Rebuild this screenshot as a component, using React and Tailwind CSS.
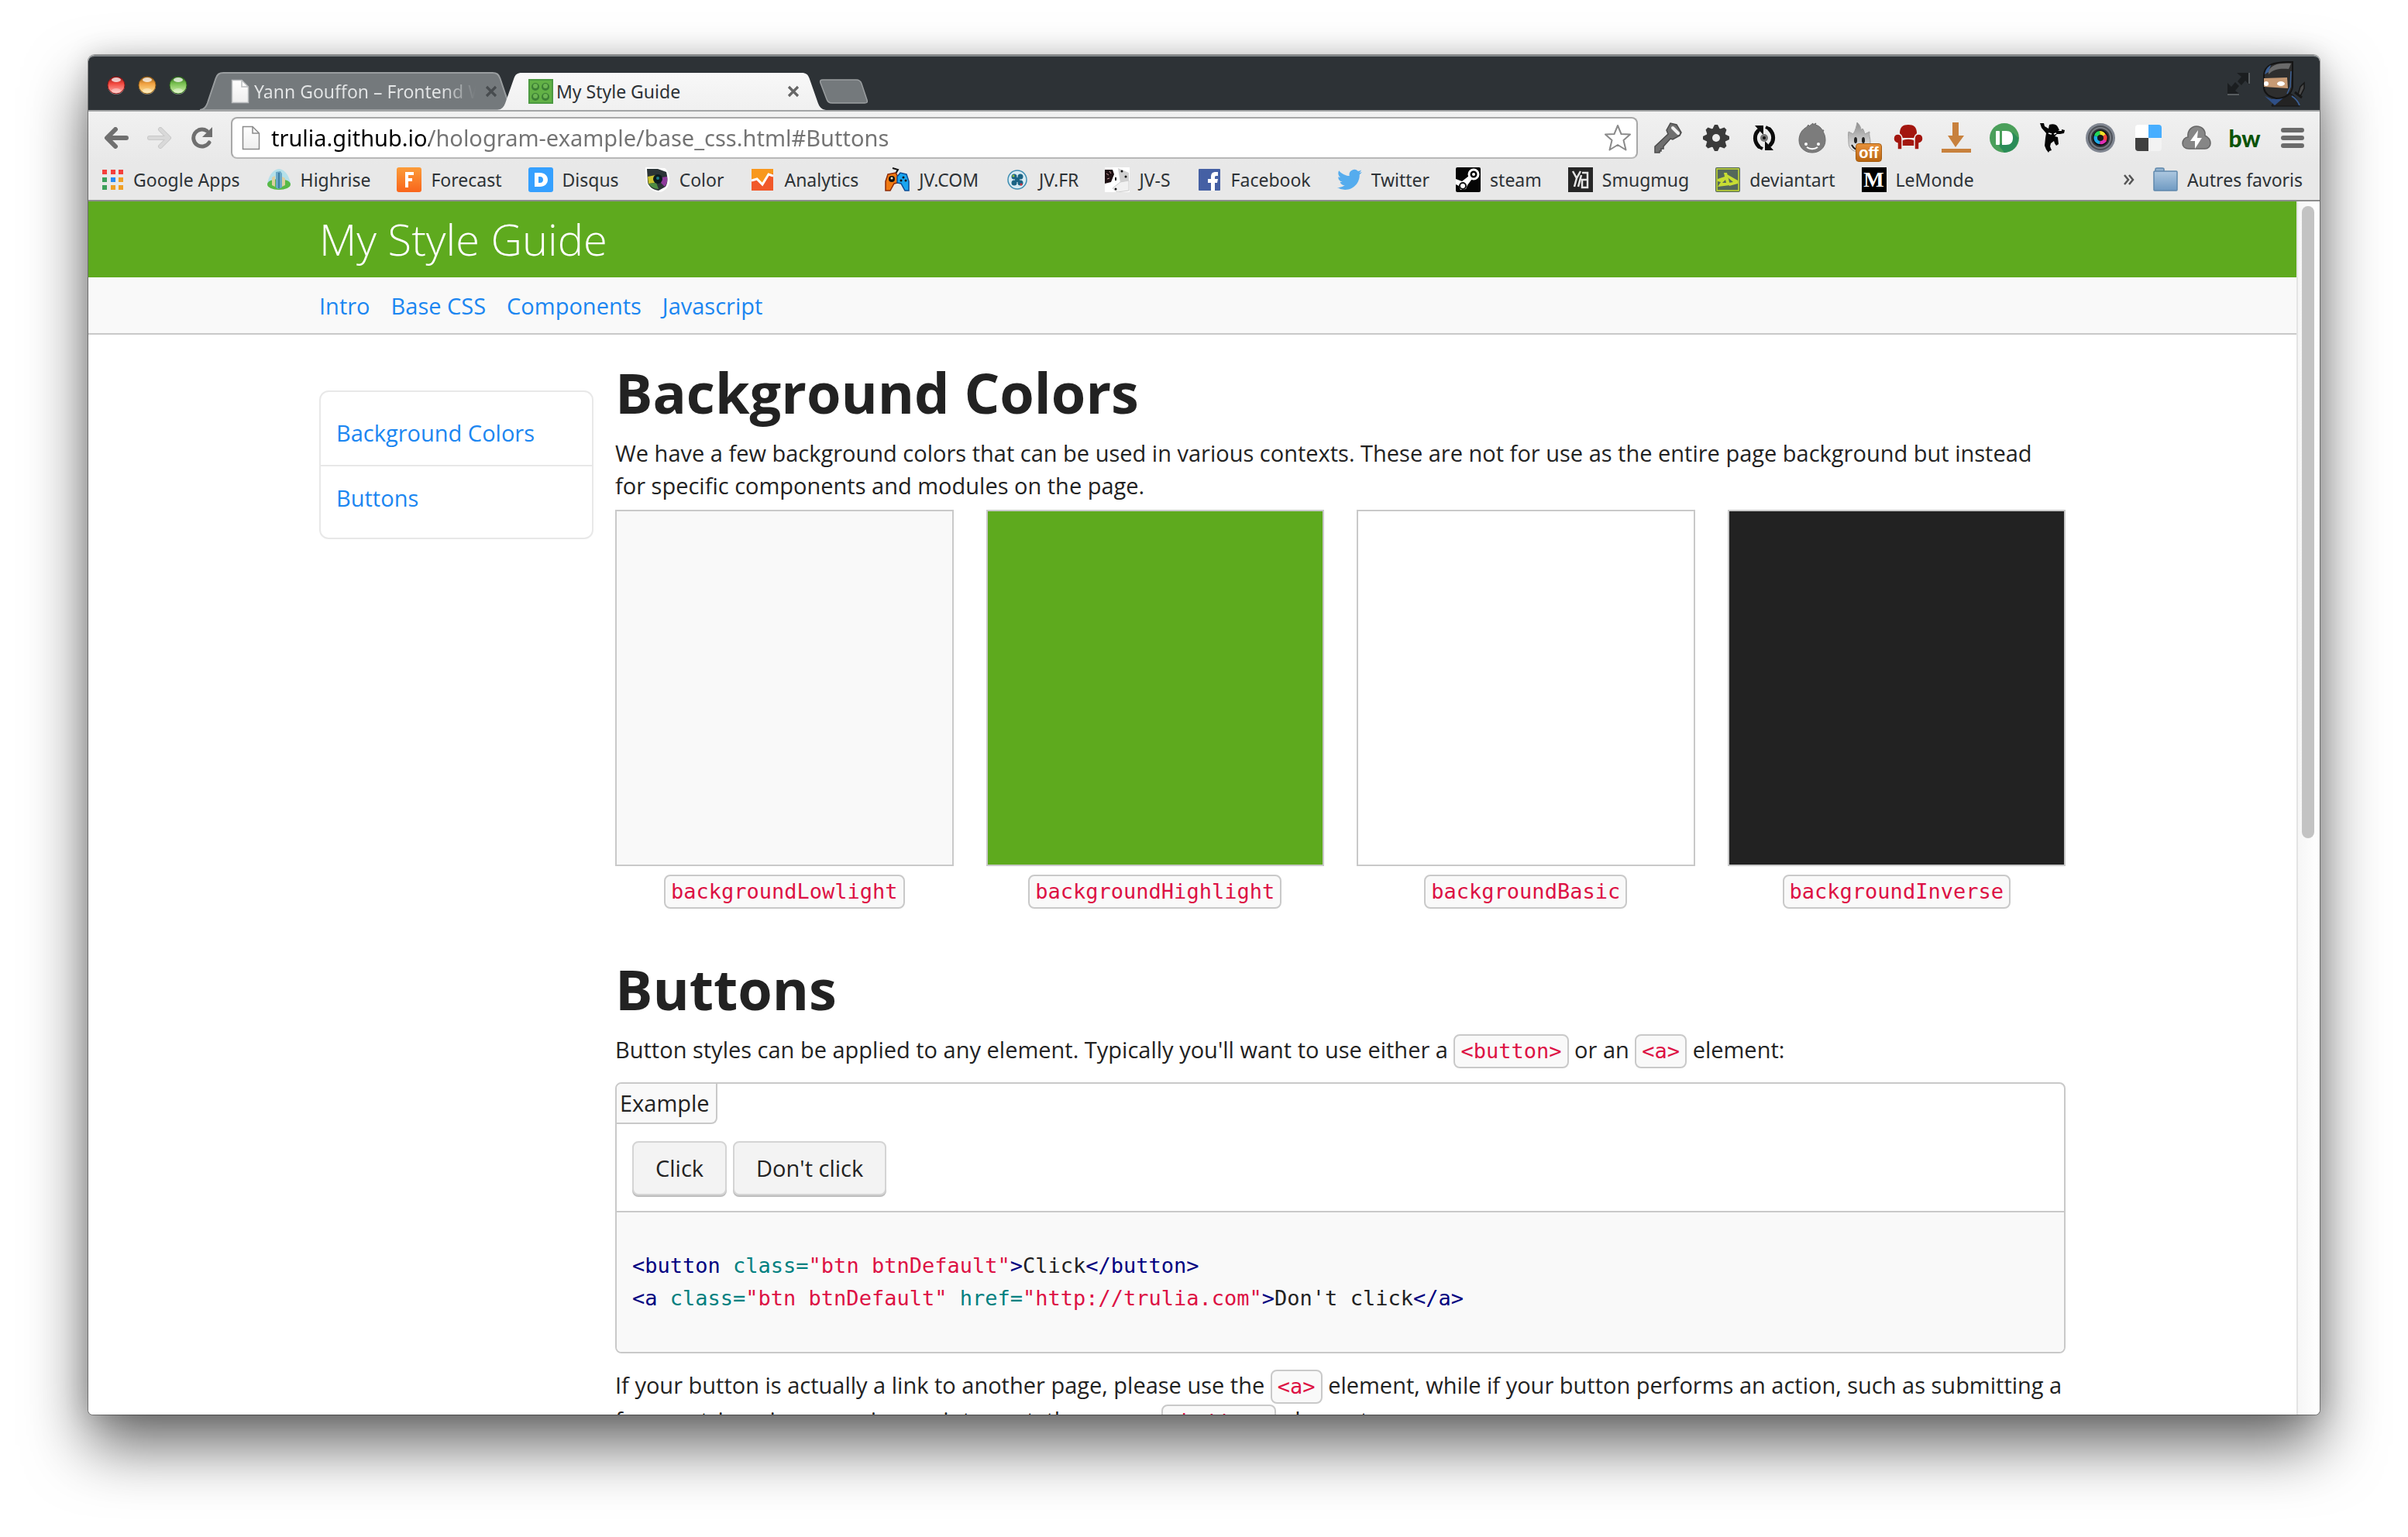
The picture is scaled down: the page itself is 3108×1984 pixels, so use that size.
import React from "react";

/* ---------- window chrome drawings ---------- */

function TrafficLight({ label, dark, base, glow }) {
  return (
    <button type="button" aria-label={label} className="size-6">
      <svg viewBox="0 0 24 24" className="size-6">
        <defs>
          <linearGradient id={"tl-" + label} x1="0" y1="0" x2="0" y2="1">
            <stop offset="0" stopColor={dark} />
            <stop offset="0.4" stopColor={base} />
            <stop offset="1" stopColor={glow} />
          </linearGradient>
        </defs>
        <circle cx="12" cy="13" r="11" fill="#8a9094" />
        <circle cx="12" cy="12" r="11" fill={"url(#tl-" + label + ")"} stroke={dark} strokeWidth="1" />
        <ellipse cx="12" cy="5" rx="6" ry="3" fill="#fff" opacity="0.75" />
        <ellipse cx="12" cy="19" rx="6" ry="3" fill="#fff" opacity="0.35" />
      </svg>
    </button>
  );
}

function PageIcon({ stroke }) {
  return (
    <svg viewBox="0 0 24 32" className="h-8 w-6 shrink-0">
      <defs>
        <linearGradient id="pageFill" x1="0" y1="0" x2="0" y2="1">
          <stop offset="0" stopColor="#fff" />
          <stop offset="1" stopColor="#eee" />
        </linearGradient>
      </defs>
      <path d="M1.5 1.5H14L22.5 10V30.5H1.5Z" fill="url(#pageFill)" stroke={stroke} strokeWidth="1.5" />
      <path d="M14 1.5V10H22.5" fill="none" stroke={stroke} strokeWidth="1.5" />
    </svg>
  );
}

function BrickIcon() {
  return (
    <svg viewBox="0 0 32 32" className="size-8 shrink-0">
      <rect width="32" height="32" fill="#4c9a41" />
      <rect x="2" y="2" width="28" height="28" fill="#62b146" />
      {[[9, 10], [22, 10], [9, 23], [22, 23]].map(([x, y]) => (
        <g key={x + "-" + y}>
          <circle cx={x} cy={y} r="5" fill="#3c7f35" />
          <circle cx={x} cy={y - 1} r="3" fill="#6cb552" />
        </g>
      ))}
    </svg>
  );
}

function CloseX({ color }) {
  return (
    <svg viewBox="0 0 16 16" className="size-4">
      <path d="M2 2L14 14M14 2L2 14" stroke={color} strokeWidth="3.2" />
    </svg>
  );
}

function TabShape({ active }) {
  return (
    <svg viewBox="0 0 416 49" preserveAspectRatio="none" className="absolute inset-0 h-full w-full">
      <defs>
        <linearGradient id="tabActive" x1="0" y1="0" x2="0" y2="1">
          <stop offset="0" stopColor="#f8f8f8" />
          <stop offset="1" stopColor="#f0f0f0" />
        </linearGradient>
      </defs>
      <path
        d="M0 49C6 48 8 45 10 40L21 8C23 3 25 1 31 1H385C391 1 393 3 395 8L406 40C408 45 410 48 416 49Z"
        fill={active ? "url(#tabActive)" : "#74797c"}
        stroke={active ? "none" : "#9a9ea0"}
        strokeWidth="2"
      />
    </svg>
  );
}

function NinjaAvatar() {
  return (
    <svg viewBox="0 0 56 60" className="h-[60px] w-14">
      <path d="M12 59L18 46L33 42C42 44 46 52 48 59Z" fill="#232323" stroke="#141414" strokeWidth="1" />
      <path d="M38 46C43 49 46 53 48 58" fill="none" stroke="#3b5f94" strokeWidth="2" />
      <path d="M3 46L12 50L30 46L16 58Z" fill="#2f4f86" />
      <path d="M2 20C2 6 14 1 39 2V34C38 43 30 49 18 49C8 47 3 42 2 36Z" fill="#2e2e2e" stroke="#141414" strokeWidth="2" />
      <path d="M8 14C11 6 20 3 37 4L34 11C24 10 14 11 8 18Z" fill="#6a6a6a" />
      <path d="M37 14L36 34L32 43" fill="none" stroke="#3b5f94" strokeWidth="1.5" />
      <path d="M3 18C4 12 7 8 11 6L8 15Z" fill="#3b5f94" />
      <path d="M2 23L32 22L33 36L2 34Z" fill="#c79a74" />
      <ellipse cx="5" cy="30" rx="3" ry="3" fill="#fff" />
      <ellipse cx="24" cy="30" rx="5" ry="3" fill="#fff" />
      <path d="M46 44L49 34L54 29L54 36L49 46Z" fill="#4a4a4a" stroke="#161616" strokeWidth="1.5" />
      <path d="M42 41L51 48" stroke="#161616" strokeWidth="3" />
    </svg>
  );
}

/* ---------- extension icons ---------- */

const EXTENSIONS = [
  {
    name: "Key",
    art: (
      <svg viewBox="0 0 38 40" className="h-10 w-[38px]">
        <path d="M2 39V31L19 15L17 10L22 1L30 3L36 13L34 17L25 22L22 21L13 31V34H10V37H8V39Z" fill="#6f6f6f" stroke="#4b4b4b" strokeWidth="1.5" />
        <path d="M25 7L32 14" stroke="#f0f0f0" strokeWidth="4" strokeLinecap="round" />
      </svg>
    ),
  },
  {
    name: "Settings",
    art: (
      <svg viewBox="-18 -18 36 36" className="size-9">
        {[0, 45, 90, 135].map((a) => (
          <path key={a} d="M-4 -13L-2 -17H2L4 -13V13L2 17H-2L-4 13Z" fill="#3a3a3a" transform={"rotate(" + a + ")"} />
        ))}
        <circle r="13" fill="#3a3a3a" />
        <circle r="5" fill="#ececec" />
      </svg>
    ),
  },
  {
    name: "Sync",
    art: (
      <svg viewBox="0 0 32 34" className="h-[34px] w-8">
        <path d="M8 8C3 13 3 22 9 28" fill="none" stroke="#0c0c0c" strokeWidth="5" strokeLinecap="round" />
        <path d="M24 26C29 21 29 12 23 6" fill="none" stroke="#0c0c0c" strokeWidth="5" strokeLinecap="round" />
        <path d="M4 1H15V13L11 9Z" fill="#0c0c0c" />
        <path d="M28 33H17V21L21 25Z" fill="#0c0c0c" />
        <path d="M18 3L24 6" stroke="#0c0c0c" strokeWidth="4" />
        <path d="M14 31L8 28" stroke="#0c0c0c" strokeWidth="4" />
        <circle cx="16" cy="17" r="5" fill="#777" />
        <circle cx="16" cy="17" r="2" fill="#111" />
      </svg>
    ),
  },
  {
    name: "Smiley",
    art: (
      <svg viewBox="0 0 36 40" className="h-10 w-9">
        <path d="M1 23C1 15 5 9 11 6L13 3L14 5L19 1V3L23 1L22 3C26 4 29 6 31 10L33 10L32 12C34 15 35 19 35 23C35 33 27 39 18 39S1 33 1 23Z" fill="#7c7c7c" stroke="#6a6a6a" />
        <circle cx="10" cy="28" r="2" fill="#fff" />
        <circle cx="26" cy="28" r="2" fill="#fff" />
        <path d="M11 32C15 35 21 35 25 32" fill="none" stroke="#fff" strokeWidth="2" />
      </svg>
    ),
  },
  {
    name: "Flame",
    art: (
      <span className="relative block h-10 w-9">
        <svg viewBox="0 0 36 40" className="h-10 w-9">
          <defs>
            <linearGradient id="flame" x1="0" y1="0" x2="0" y2="1">
              <stop offset="0" stopColor="#8d8d8d" />
              <stop offset="1" stopColor="#efefef" />
            </linearGradient>
          </defs>
          <path d="M3 26C3 20 2 16 3 12L9 15C12 10 13 5 14 0C18 4 19 7 19 10L21 8C23 10 23 13 24 15L30 12C29 17 31 20 31 25C31 34 25 38 17 38S3 34 3 26Z" fill="url(#flame)" stroke="#a0a0a0" strokeWidth="1" />
          <ellipse cx="12" cy="23" rx="2" ry="4" fill="#222" />
          <ellipse cx="22" cy="23" rx="2" ry="4" fill="#222" />
          <path d="M7 29C10 35 14 36 18 36" fill="none" stroke="#222" strokeWidth="2" />
        </svg>
        <span className="absolute top-[27px] left-3 h-6 w-[34px] rounded-sm border border-[#a55c10] bg-linear-to-b from-[#e8913a] to-[#b9660f] text-center font-['Liberation_Sans'] text-xl leading-[22px] font-bold text-white">
          off
        </span>
      </span>
    ),
  },
  {
    name: "Chair",
    art: (
      <svg viewBox="0 0 40 36" className="h-9 w-10">
        <path d="M9 12C9 4 13 1 20 1S31 4 31 12L28 18H12Z" fill="#a3160f" />
        <path d="M11 22C17 19 23 19 29 22L28 28H12Z" fill="#a3160f" />
        <path d="M1 19C1 14 4 13 7 13C11 13 12 17 12 20V33H6V25C3 24 1 22 1 19ZM39 19C39 14 36 13 33 13C29 13 28 17 28 20V33H34V25C37 24 39 22 39 19Z" fill="#a3160f" stroke="#ececec" strokeWidth="1.5" />
      </svg>
    ),
  },
  {
    name: "Download",
    art: (
      <svg viewBox="0 0 38 40" className="h-10 w-[38px]">
        <path d="M14 0H22V17H29L18 32L8 17H14ZM0 34H38V39H0Z" fill="#c8813d" />
      </svg>
    ),
  },
  {
    name: "Push",
    art: (
      <svg viewBox="0 0 38 38" className="size-[38px]">
        <circle cx="19" cy="19" r="19" fill="#4a9f5a" />
        <path d="M30 12L37 19C37 29 30 37 19 38L12 29Z" fill="#2a8c58" />
        <rect x="8" y="10" width="5" height="18" rx="1" fill="#fff" />
        <path d="M16 10H21C27 10 30 13 30 19S27 28 21 28H16Z" fill="#fff" />
      </svg>
    ),
  },
  {
    name: "Jumping ninja",
    art: (
      <svg viewBox="0 0 34 40" className="h-10 w-[34px]">
        <path d="M1 1L6 1L7 5L12 8L13 3C18 1 23 3 24 6L26 10L24 11L29 11V9L33 10L32 14L27 15L23 15L20 18L24 19L25 28L22 30L20 27L19 24L15 27L14 31L16 36L13 37L12 39L9 35L7 30L8 20L9 14L3 7Z" fill="#060606" />
        <path d="M12 14L16 15M19 15L22 14" stroke="#fff" strokeWidth="1.5" />
      </svg>
    ),
  },
  {
    name: "Lens",
    art: (
      <svg viewBox="0 0 38 38" className="size-[38px]">
        <circle cx="19" cy="19" r="19" fill="#808691" />
        <circle cx="19" cy="19" r="16" fill="#4d5158" />
        <circle cx="19" cy="19" r="14" fill="#777b82" />
        <circle cx="19" cy="19" r="12" fill="#303238" />
        <circle cx="19" cy="19" r="10" fill="#0b0b0d" />
        <path d="M19 19L11 16A8 8 0 0 1 18 10Z" fill="#22d65a" />
        <path d="M19 19L18 10A9 9 0 0 1 26 15Z" fill="#f1e22b" />
        <path d="M19 19L26 14A9 9 0 0 1 26 24Z" fill="#f0433a" />
        <path d="M19 19L27 23A9 9 0 0 1 18 27Z" fill="#e02fb5" />
        <path d="M19 19L18 27A8 8 0 0 1 11 16Z" fill="#1fa9e6" />
        <circle cx="19" cy="19" r="4" fill="#17171c" />
      </svg>
    ),
  },
  {
    name: "Bookmarking",
    art: (
      <span className="grid size-[34px] grid-cols-2 overflow-hidden rounded-sm">
        <span className="bg-white" />
        <span className="bg-[#47aeff]" />
        <span className="bg-[#404040]" />
        <span className="bg-[#f3f3f3]" />
      </span>
    ),
  },
  {
    name: "Cloud",
    art: (
      <svg viewBox="0 0 38 34" className="h-[34px] w-[38px]">
        <path d="M9 31C4 31 1 28 1 24C1 20 4 16 8 16C7 7 13 2 19 2C26 2 31 7 30 14C34 16 37 19 37 24C37 28 34 31 30 31Z" fill="#868686" stroke="#666" strokeWidth="1.5" />
        <path d="M21 7L11 21H17L17 31L26 17H20Z" fill="#fff" />
      </svg>
    ),
  },
  {
    name: "bw",
    art: <span className="block font-['Lato'] text-[30px] leading-9 font-black text-[#0b5309]">bw</span>,
  },
];

/* ---------- bookmark icons ---------- */

const APP_DOTS = ["#f43f3b", "#f43f3b", "#f43f3b", "#3c9f5a", "#2a8bf2", "#f0a024", "#3c9f5a", "#f0a024", "#f0a024"];

const BOOKMARKS = [
  {
    name: "Google Apps",
    art: (
      <span className="grid h-8 w-7 grid-cols-3 place-content-center gap-1">
        {APP_DOTS.map((c, i) => (
          <span key={i} className="size-1.5" style={{ backgroundColor: c }} />
        ))}
      </span>
    ),
  },
  {
    name: "Highrise",
    art: (
      <svg viewBox="0 0 32 32" className="size-8">
        <path d="M16 2C25 3 30 13 31 22L1 22C2 13 7 3 16 2Z" fill="#b4e0ea" />
        <ellipse cx="16" cy="22" rx="15" ry="7" fill="#58b947" />
        <path d="M7 13L11 11V25L7 23ZM20 12L24 14V23L20 25Z" fill="#dccfa0" />
        <path d="M12 6L18 5L20 8V26L15 28L12 26Z" fill="#6ba9c8" />
        <path d="M16 7V27" stroke="#3c7ea3" strokeWidth="2" />
      </svg>
    ),
  },
  {
    name: "Forecast",
    art: (
      <svg viewBox="0 0 32 32" className="size-8">
        <defs>
          <linearGradient id="forecast" x1="0" y1="0" x2="0" y2="1">
            <stop offset="0" stopColor="#fb9c3a" />
            <stop offset="1" stopColor="#f9651b" />
          </linearGradient>
        </defs>
        <rect width="32" height="32" rx="3" fill="url(#forecast)" />
        <path d="M13 26V8H22M13 16H20" fill="none" stroke="#fff" strokeWidth="4" />
      </svg>
    ),
  },
  {
    name: "Disqus",
    art: (
      <svg viewBox="0 0 32 32" className="size-8">
        <rect width="32" height="32" rx="3" fill="#35a0ff" />
        <path d="M8 7H15C21 7 25 11 25 16S21 25 15 25H8ZM13 12V20H15C18 20 19 18 19 16S18 12 15 12Z" fill="#fff" fillRule="evenodd" />
      </svg>
    ),
  },
  {
    name: "Color",
    art: (
      <svg viewBox="0 0 32 32" className="size-8">
        <path d="M0 0L25 1C29 4 31 10 31 17C31 25 25 32 17 32C9 31 2 26 1 18Z" fill="#fff" />
        <path d="M2 2H16L27 6C29 14 29 20 26 25L17 30C10 29 4 25 3 19Z" fill="#2b3436" />
        <path d="M3 12L13 10L14 20L4 21Z" fill="#c9c22f" />
        <path d="M4 21L14 20L17 28C11 28 7 25 4 21Z" fill="#4d8c42" />
        <path d="M21 13L28 12C29 17 28 21 25 25L20 20Z" fill="#8d3a9b" />
        <circle cx="16" cy="15" r="6" fill="#0b1a1d" />
        <circle cx="16" cy="14" r="2" fill="#1d7a84" />
      </svg>
    ),
  },
  {
    name: "Analytics",
    art: (
      <svg viewBox="0 0 28 28" className="size-7">
        <rect width="28" height="28" fill="#f1592a" />
        <path d="M0 0H28V6L22 8L15 20L8 13L0 16Z" fill="#f8981d" />
        <path d="M0 15L7 13L14 20L22 7L28 9" fill="none" stroke="#fff" strokeWidth="3" />
      </svg>
    ),
  },
  {
    name: "JV.COM",
    art: (
      <svg viewBox="0 0 32 32" className="size-8">
        <path d="M10 1L17 3L14 8" fill="none" stroke="#111" strokeWidth="2" />
        <path d="M4 9L14 7L17 12V20L12 21L7 30L1 30V18Z" fill="#f07a12" stroke="#8c2a06" strokeWidth="1.5" />
        <path d="M28 9L20 7L16 12V20L21 21L26 30L31 30V18Z" fill="#19a5f0" stroke="#0b4c96" strokeWidth="1.5" />
        <circle cx="9" cy="15" r="4" fill="#111" />
        <circle cx="9" cy="14" r="1.5" fill="#f8f0d0" />
        <circle cx="24" cy="13" r="1.5" fill="#111" />
        <circle cx="21" cy="17" r="1.5" fill="#111" />
        <circle cx="27" cy="17" r="1.5" fill="#111" />
      </svg>
    ),
  },
  {
    name: "JV.FR",
    art: (
      <svg viewBox="0 0 28 28" className="size-7">
        <circle cx="14" cy="14" r="12" fill="#d8ebf3" stroke="#3d8db2" strokeWidth="1.5" />
        <g fill="#1b6485">
          <circle cx="10" cy="10" r="3.5" />
          <circle cx="18" cy="10" r="3.5" />
          <circle cx="10" cy="18" r="3.5" />
          <circle cx="18" cy="18" r="3.5" />
          <rect x="11" y="11" width="6" height="6" />
        </g>
        <circle cx="9" cy="9" r="1.5" fill="#8fc13e" />
        <circle cx="19" cy="20" r="1.5" fill="#d92f3b" />
      </svg>
    ),
  },
  {
    name: "JV-S",
    art: (
      <svg viewBox="0 0 32 32" className="size-8">
        <rect width="32" height="32" fill="#fff" />
        <path d="M0 3L10 3L12 9L8 19L0 21Z" fill="#1f1214" />
        <path d="M2 8L5 10M6 5L8 8M3 15L6 14" stroke="#c79a9c" strokeWidth="1" />
        <path d="M17 1L31 7V18L20 20Z" fill="#d0d0d0" />
        <path d="M10 27L20 19L31 17V30L16 32Z" fill="#f1f1f1" stroke="#ccc" />
        <circle cx="22" cy="5" r="1.5" fill="#111" />
        <circle cx="27" cy="12" r="1.5" fill="#111" />
        <circle cx="14" cy="28" r="1.5" fill="#111" />
        <path d="M14 13V17" stroke="#111" strokeWidth="2" />
      </svg>
    ),
  },
  {
    name: "Facebook",
    art: (
      <svg viewBox="0 0 28 28" className="size-7">
        <rect width="28" height="28" rx="1" fill="#4560a4" />
        <path d="M16 28V18H12V13H16V10C16 6 18 4 22 4H25V9H23C21 9 21 10 21 11V13H25L24 18H21V28Z" fill="#fff" />
      </svg>
    ),
  },
  {
    name: "Twitter",
    art: (
      <svg viewBox="0 0 24 24" className="size-8">
        <path
          fill="#55acee"
          d="M23.95 4.57a10 10 0 0 1-2.82.775 4.96 4.96 0 0 0 2.16-2.72c-.951.555-2.005.959-3.127 1.184a4.92 4.92 0 0 0-8.384 4.482C7.69 8.09 4.07 6.13 1.64 3.16a4.82 4.82 0 0 0-.666 2.47c0 1.71.87 3.213 2.188 4.096a4.9 4.9 0 0 1-2.228-.616v.06a4.92 4.92 0 0 0 3.946 4.827 5 5 0 0 1-2.212.085 4.94 4.94 0 0 0 4.604 3.417 9.87 9.87 0 0 1-6.102 2.105c-.39 0-.779-.023-1.17-.067a14 14 0 0 0 7.557 2.209c9.053 0 13.998-7.496 13.998-13.985 0-.21 0-.42-.015-.63a9.94 9.94 0 0 0 2.46-2.548z"
        />
      </svg>
    ),
  },
  {
    name: "steam",
    art: (
      <svg viewBox="0 0 32 32" className="size-8">
        <rect width="32" height="32" rx="2" fill="#050505" />
        <circle cx="23" cy="9" r="6" fill="none" stroke="#fff" strokeWidth="3" />
        <circle cx="23" cy="9" r="2" fill="#fff" />
        <path d="M0 15L8 18L17 11L21 15L15 23L13 28L6 29L4 24L0 22Z" fill="#fff" />
        <circle cx="9" cy="24" r="4" fill="none" stroke="#111" strokeWidth="2" />
      </svg>
    ),
  },
  {
    name: "Smugmug",
    art: (
      <svg viewBox="0 0 32 32" className="size-8">
        <rect width="32" height="32" fill="#262626" />
        <path d="M6 5L11 14L16 5M11 14L8 25M13 25L17 10M18 7H25V26H18V16H25" fill="none" stroke="#e6e6e6" strokeWidth="2.5" />
      </svg>
    ),
  },
  {
    name: "deviantart",
    art: (
      <svg viewBox="0 0 32 32" className="size-8">
        <rect width="32" height="32" rx="2" fill="#54685a" />
        <rect x="2" y="2" width="28" height="28" fill="none" stroke="#c7dd33" strokeWidth="1.5" />
        <path d="M3 15L12 12L11 7H15L19 23L3 25L7 19L3 18ZM15 9L29 17V21L18 24L17 20L23 19L17 14Z" fill="#c7dd33" />
        <path d="M9 20L13 16L14 20Z" fill="#54685a" />
      </svg>
    ),
  },
  {
    name: "LeMonde",
    art: (
      <span className="grid size-8 place-items-center bg-black font-['Liberation_Serif'] text-[28px] leading-8 font-bold text-white">
        M
      </span>
    ),
  },
];

function FolderIcon() {
  return (
    <svg viewBox="0 0 32 32" className="size-8">
      <defs>
        <linearGradient id="folder" x1="0" y1="0" x2="0" y2="1">
          <stop offset="0" stopColor="#adc8e0" />
          <stop offset="1" stopColor="#6f9ac2" />
        </linearGradient>
      </defs>
      <path d="M3 5V2C3 1 4 1 5 1H12C13 1 14 1 14 2V5" fill="#94b4d0" stroke="#5f88ac" strokeWidth="1.5" />
      <rect x="1" y="5" width="30" height="25" rx="1" fill="url(#folder)" stroke="#5f88ac" strokeWidth="1.5" />
    </svg>
  );
}

/* ---------- page pieces ---------- */

function Code({ children }) {
  return (
    <code className="inline-block rounded-lg border-2 border-[#c9c9c9] bg-[#f9f9f9] px-[7px] font-['DejaVu_Sans_Mono',monospace] text-[27px] leading-10 text-[#dd1144]">
      {children}
    </code>
  );
}

const SWATCHES = [
  { name: "backgroundLowlight", fill: "bg-[#f9f9f9]" },
  { name: "backgroundHighlight", fill: "bg-[#5eaa1e]" },
  { name: "backgroundBasic", fill: "bg-white" },
  { name: "backgroundInverse", fill: "bg-[#222222]" },
];

const Tag = ({ children }) => <span className="text-[#000080]">{children}</span>;
const Attr = ({ children }) => <span className="text-[#008080]">{children}</span>;
const Str = ({ children }) => <span className="text-[#dd1144]">{children}</span>;

function TitleBar() {
  return (
    <header className="flex h-[71px] shrink-0 items-end rounded-t-lg border-t-2 border-[#7f8487] bg-[#2d3236] pr-[18px]">
      <div className="flex gap-4 self-center pt-1 pl-6">
        <TrafficLight label="Close" dark="#8f1414" base="#f2493f" glow="#ffb9b4" />
        <TrafficLight label="Minimize" dark="#8f5a14" base="#f0a040" glow="#ffe9a0" />
        <TrafficLight label="Zoom" dark="#2f6a1c" base="#78c050" glow="#d8f5b4" />
      </div>
      <div role="tablist" className="ml-4 flex h-[49px] items-end">
        <div role="tab" aria-selected="false" className="relative -mr-6 flex h-[49px] w-[408px] items-center pr-6 pl-10">
          <TabShape />
          <div className="relative flex min-w-0 flex-1 items-center">
            <PageIcon stroke="#b9bcbe" />
            <span className="ml-1.5 flex-1 overflow-hidden bg-linear-to-r from-[#e4e6e7] from-85% to-[#74797c] bg-clip-text text-[23px] leading-8 whitespace-nowrap text-transparent">
              Yann Gouffon – Frontend Web
            </span>
            <button type="button" aria-label="Close tab" className="ml-3">
              <CloseX color="#484c4f" />
            </button>
          </div>
        </div>
        <div role="tab" aria-selected="true" className="relative flex h-[49px] w-[424px] items-center pr-[34px] pl-10">
          <TabShape active />
          <div className="relative flex flex-1 items-center">
            <BrickIcon />
            <span className="ml-1 flex-1 text-[23px] leading-8 text-[#2d3236]">My Style Guide</span>
            <button type="button" aria-label="Close tab">
              <CloseX color="#666" />
            </button>
          </div>
        </div>
        <button type="button" aria-label="New tab" className="-ml-2 self-center">
          <svg viewBox="0 0 62 32" className="h-8 w-[62px]">
            <path d="M4 1H47C51 1 53 3 54 6L61 27C62 30 61 31 58 31H16C12 31 10 29 9 26L1 5C0 2 1 1 4 1Z" fill="#74797c" stroke="#9a9ea0" strokeWidth="1.5" />
          </svg>
        </button>
      </div>
      <div className="ml-auto flex items-center gap-4 pb-1">
        <button type="button" aria-label="Full screen">
          <svg viewBox="0 0 30 30" className="size-[30px]">
            <path d="M13 1H29V16L24 11L19 17L14 12L19 6ZM17 29H1V14L6 19L11 13L16 18L11 24Z" fill="#1b1e20" />
            <path d="M1 29H16M29 1V15" stroke="#6a6f72" strokeWidth="1.5" />
          </svg>
        </button>
        <NinjaAvatar />
      </div>
    </header>
  );
}

function Toolbar() {
  return (
    <div className="flex h-[70px] shrink-0 items-center border-t-2 border-[#a3a5a6] bg-linear-to-b from-[#f1f1f1] to-[#e8e8e8]">
      <div className="flex w-[184px] shrink-0 items-center gap-6 pl-5">
        <button type="button" aria-label="Back">
          <svg viewBox="0 0 32 28" className="h-7 w-8">
            <path d="M15 3L4 14L15 25M5 14H29" fill="none" stroke="#6f6f6f" strokeWidth="6" strokeLinecap="round" strokeLinejoin="round" />
          </svg>
        </button>
        <button type="button" aria-label="Forward">
          <svg viewBox="0 0 32 28" className="h-7 w-8">
            <path d="M17 3L28 14L17 25M27 14H3" fill="none" stroke="#c9c9c9" strokeWidth="6" strokeLinecap="round" strokeLinejoin="round" />
            <path d="M17 3L28 14L17 25M27 14H3" fill="none" stroke="#d9d9d9" strokeWidth="4" strokeLinecap="round" strokeLinejoin="round" />
          </svg>
        </button>
        <button type="button" aria-label="Reload">
          <svg viewBox="0 0 30 28" className="h-7 w-[30px]">
            <path d="M24 20A11 11 0 1 1 21 5" fill="none" stroke="#6f6f6f" strokeWidth="5" strokeLinecap="round" />
            <path d="M28 0V13H15Z" fill="#6f6f6f" />
          </svg>
        </button>
      </div>
      <div className="flex h-[54px] flex-1 items-center rounded-lg border-2 border-[#a8a8a8] border-b-[#b8b8b8] bg-white pr-1.5 pl-3">
        <PageIcon stroke="#8a8a8a" />
        <input
          type="text"
          aria-label="Address"
          defaultValue="trulia.github.io/hologram-example/base_css.html#Buttons"
          className="ml-3.5 min-w-0 flex-1 bg-[linear-gradient(90deg,#000_204px,#737373_204px)] bg-clip-text text-[29px] leading-10 text-transparent outline-none"
        />
        <button type="button" aria-label="Bookmark this page">
          <svg viewBox="0 0 36 36" className="size-9">
            <path d="M18 2L22.5 13L34 13.5L25.5 21L28.5 33.5L18 27L7.5 33.5L10.5 21L2 13.5L13.5 13Z" fill="#fff" stroke="#8a8a8a" strokeWidth="2" strokeLinejoin="round" />
          </svg>
        </button>
      </div>
      <div className="flex shrink-0 items-center pr-1 pl-2">
        {EXTENSIONS.map((e) => (
          <button key={e.name} type="button" aria-label={e.name} className="grid w-[62px] place-items-center">
            {e.art}
          </button>
        ))}
        <button type="button" aria-label="Menu" className="grid w-[62px] place-items-center">
          <svg viewBox="0 0 30 28" className="h-7 w-[30px]">
            <path d="M3 4H27M3 14H27M3 24H27" stroke="#6b6b6b" strokeWidth="6" strokeLinecap="round" />
          </svg>
        </button>
      </div>
    </div>
  );
}

function BookmarksBar() {
  return (
    <nav aria-label="Bookmarks" className="flex h-12 shrink-0 items-center justify-between border-b-2 border-[#8c8c8c] bg-[#e8e8e8] pr-[22px] pb-1.5 pl-[18px] text-[23px] leading-8 text-[#2d3236]">
      <div className="flex items-center gap-[34px]">
        {BOOKMARKS.map((b) => (
          <a key={b.name} href="#" className="flex items-center gap-3 whitespace-nowrap">
            {b.name === "Google Apps" ? b.art : <span className="grid size-8 place-items-center">{b.art}</span>}
            {b.name}
          </a>
        ))}
      </div>
      <div className="flex items-center gap-6">
        <button type="button" aria-label="More bookmarks">
          <svg viewBox="0 0 14 14" className="size-3.5">
            <path d="M1 1L6 7L1 13M7 1L12 7L7 13" fill="none" stroke="#555" strokeWidth="2.5" />
          </svg>
        </button>
        <button type="button" className="flex items-center gap-3">
          <FolderIcon />
          Autres favoris
        </button>
      </div>
    </nav>
  );
}

function StyleGuide() {
  return (
    <div className="min-w-0 flex-1 overflow-hidden bg-white font-['Open_Sans',sans-serif] text-[29px] leading-[42px] text-[#222222]">
      <div className="h-[98px] bg-[#5eaa1e]">
        <div className="mx-auto max-w-[2254px]">
          <p className="pt-1.5 text-[56px] leading-[84px] font-light text-white">My Style Guide</p>
        </div>
      </div>
      <nav aria-label="Sections" className="border-b-2 border-[#c9c9c9] bg-[#f9f9f9] pt-4 pb-3.5">
        <div className="mx-auto flex max-w-[2254px] gap-[27px] text-[#1b86f1]">
          <a href="#intro">Intro</a>
          <a href="#base">Base CSS</a>
          <a href="#components">Components</a>
          <a href="#javascript">Javascript</a>
        </div>
      </nav>
      <div className="mx-auto flex max-w-[2254px] items-start gap-7">
        <nav aria-label="On this page" className="mt-[72px] w-[354px] shrink-0 rounded-xl border-2 border-[#e8e8e8] text-[#1b86f1]">
          <a href="#background" className="block border-b-2 border-[#e8e8e8] px-5 pt-8 pb-5">
            Background Colors
          </a>
          <a href="#buttons" className="block px-5 pt-5 pb-[30px]">
            Buttons
          </a>
        </nav>
        <main className="min-w-0 flex-1 pt-8">
          <h1 id="background" className="text-[72px] leading-[84px] font-bold">
            Background Colors
          </h1>
          <p className="mt-4">
            We have a few background colors that can be used in various contexts. These are not for use as the entire
            page background but instead for specific components and modules on the page.
          </p>
          <div className="mt-2.5 grid grid-cols-4 gap-[42px]">
            {SWATCHES.map((s) => (
              <figure key={s.name} className="text-center">
                <div className={"h-[460px] border-2 border-[#c9c9c9] " + s.fill} />
                <figcaption className="mt-2.5 h-11">
                  <Code>{s.name}</Code>
                </figcaption>
              </figure>
            ))}
          </div>
          <h1 id="buttons" className="mt-[62px] text-[72px] leading-[84px] font-bold">
            Buttons
          </h1>
          <p className="mt-4">
            Button styles can be applied to any element. Typically you'll want to use either a{" "}
            <Code>{"<button>"}</Code> or an <Code>{"<a>"}</Code> element:
          </p>
          <section className="mt-[18px] overflow-hidden rounded-lg border-2 border-[#c9c9c9]">
            <span className="block w-fit rounded-br-lg border-r-2 border-b-2 border-[#c9c9c9] bg-[#f9f9f9] py-1 pr-2 pl-1">
              Example
            </span>
            <div className="flex gap-2 px-5 pt-[22px] pb-5">
              <button type="button" className="rounded-lg border-2 border-[#d4d4d4] bg-[#f3f3f3] px-7 py-3 shadow-[0_2px_0_#bdbdbd]">
                Click
              </button>
              <a href="#buttons" className="rounded-lg border-2 border-[#d4d4d4] bg-[#f3f3f3] px-7 py-3 shadow-[0_2px_0_#bdbdbd]">
                Don't click
              </a>
            </div>
            <pre className="border-t-2 border-[#c9c9c9] bg-[#f9f9f9] px-5 py-12 font-['DejaVu_Sans_Mono',monospace] text-[27px] leading-[42px]">
              <code className="font-['DejaVu_Sans_Mono',monospace]">
                <Tag>{"<button"}</Tag> <Attr>class=</Attr>
                <Str>"btn btnDefault"</Str>
                <Tag>{">"}</Tag>Click<Tag>{"</button>"}</Tag>
                {"\n"}
                <Tag>{"<a"}</Tag> <Attr>class=</Attr>
                <Str>"btn btnDefault"</Str> <Attr>href=</Attr>
                <Str>"http://trulia.com"</Str>
                <Tag>{">"}</Tag>Don't click<Tag>{"</a>"}</Tag>
              </code>
            </pre>
          </section>
          <p className="mt-5">
            If your button is actually a link to another page, please use the <Code>{"<a>"}</Code> element, while if
            your button performs an action, such as submitting a form or triggering some javascript event, then use a{" "}
            <Code>{"<button>"}</Code> element.
          </p>
        </main>
      </div>
    </div>
  );
}

export default function App() {
  return (
    <div className="h-screen bg-white px-[114px] pt-[71px] pb-[158px] font-['Noto_Sans',sans-serif]">
      <div className="flex h-full flex-col overflow-hidden rounded-t-lg rounded-b-md shadow-[0_0_0_1px_rgba(0,0,0,0.35),0_40px_80px_rgba(0,0,0,0.6),0_0_32px_rgba(0,0,0,0.15)]">
        <TitleBar />
        <Toolbar />
        <BookmarksBar />
        <div className="flex min-h-0 flex-1">
          <StyleGuide />
          <div className="w-[30px] shrink-0 border-l-2 border-[#e4e4e4] bg-linear-to-r from-[#f6f6f6] to-white pt-1.5 pl-[5px]">
            <div className="h-[816px] w-4 rounded-full bg-[#c3c3c3]" />
          </div>
        </div>
      </div>
    </div>
  );
}
